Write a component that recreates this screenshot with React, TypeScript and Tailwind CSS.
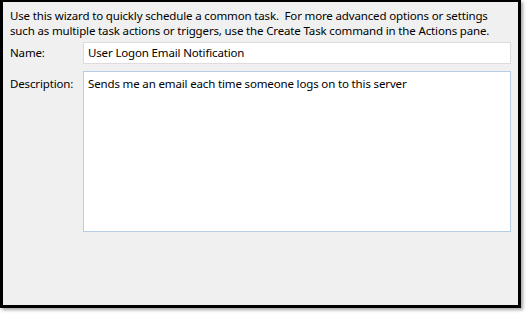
export default function App() {
  return (
    <div className="w-[526px] h-[315px] bg-white font-['Noto_Sans',sans-serif] text-[11.5px] tracking-[-0.15px] text-black">
      <div className="w-[521px] h-[308px] border-[3px] border-t-2 border-black bg-[#f0f0f0] shadow-[2px_2px_3px_rgba(0,0,0,0.35)] pl-[7px] pr-[7px] pt-[6px]">
        <p className="leading-[15px] whitespace-nowrap">
          Use this wizard to quickly schedule a common task.&nbsp; For more advanced options or settings
          <br />
          such as multiple task actions or triggers, use the Create Task command in the Actions pane.
        </p>

        {/* Name */}
        <div className="flex items-center mt-[4px]">
          <label className="w-[73px]">Name:</label>
          <div className="flex-1 h-[22px] bg-white border border-[#dcdcdc] flex items-center px-[4px]">
            User Logon Email Notification
          </div>
        </div>

        {/* Description */}
        <div className="flex mt-[7px]">
          <label className="w-[73px] pt-[4px]">Description:</label>
          <div className="flex-1 h-[161px] bg-white border border-[#b7cde3] px-[4px] pt-[3px]">
            Sends me an email each time someone logs on to this server
          </div>
        </div>
      </div>
    </div>
  );
}
